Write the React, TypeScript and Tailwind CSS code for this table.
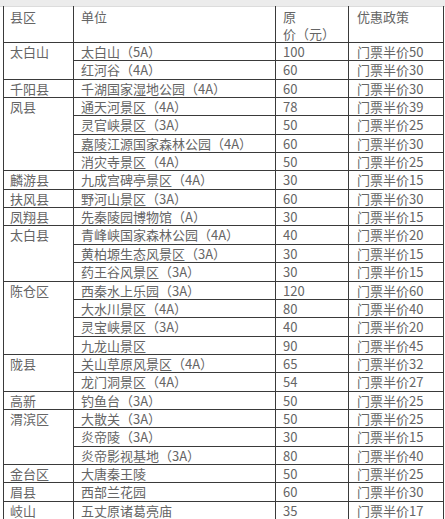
const rows: { county?: string; span?: number; name: string; price: string; policy: string }[] = [
  { county: '太白山', span: 2, name: '太白山（5A）', price: '100', policy: '门票半价50' },
  { name: '红河谷（4A）', price: '60', policy: '门票半价30' },
  { county: '千阳县', span: 1, name: '千湖国家湿地公园（4A）', price: '60', policy: '门票半价30' },
  { county: '凤县', span: 4, name: '通天河景区（4A）', price: '78', policy: '门票半价39' },
  { name: '灵官峡景区（3A）', price: '50', policy: '门票半价25' },
  { name: '嘉陵江源国家森林公园（4A）', price: '60', policy: '门票半价30' },
  { name: '消灾寺景区（4A）', price: '50', policy: '门票半价25' },
  { county: '麟游县', span: 1, name: '九成宫碑亭景区（4A）', price: '30', policy: '门票半价15' },
  { county: '扶风县', span: 1, name: '野河山景区（3A）', price: '60', policy: '门票半价30' },
  { county: '凤翔县', span: 1, name: '先秦陵园博物馆（A）', price: '30', policy: '门票半价15' },
  { county: '太白县', span: 3, name: '青峰峡国家森林公园（4A）', price: '40', policy: '门票半价20' },
  { name: '黄柏塬生态风景区（3A）', price: '30', policy: '门票半价15' },
  { name: '药王谷风景区（3A）', price: '30', policy: '门票半价15' },
  { county: '陈仓区', span: 4, name: '西秦水上乐园（3A）', price: '120', policy: '门票半价60' },
  { name: '大水川景区（4A）', price: '80', policy: '门票半价40' },
  { name: '灵宝峡景区（3A）', price: '40', policy: '门票半价20' },
  { name: '九龙山景区', price: '90', policy: '门票半价45' },
  { county: '陇县', span: 2, name: '关山草原风景区（4A）', price: '65', policy: '门票半价32' },
  { name: '龙门洞景区（4A）', price: '54', policy: '门票半价27' },
  { county: '高新', span: 1, name: '钓鱼台（3A）', price: '50', policy: '门票半价25' },
  { county: '渭滨区', span: 3, name: '大散关（3A）', price: '50', policy: '门票半价25' },
  { name: '炎帝陵（3A）', price: '30', policy: '门票半价15' },
  { name: '炎帝影视基地（3A）', price: '80', policy: '门票半价40' },
  { county: '金台区', span: 1, name: '大唐秦王陵', price: '50', policy: '门票半价25' },
  { county: '眉县', span: 1, name: '西部兰花园', price: '60', policy: '门票半价30' },
  { county: '岐山', span: 1, name: '五丈原诸葛亮庙', price: '35', policy: '门票半价17' },
];

// rows share 477px between the header line (y=40) and the bottom line (y=517)
const rowHeight = (i: number) => Math.round(((i + 1) * 477) / rows.length) - Math.round((i * 477) / rows.length);

const cell = 'border border-[#3a3a3a] px-0 text-[13px] leading-[16px] text-[#656565] whitespace-nowrap';

export default function App() {
  return (
    <div
      className="w-[445px] h-[519px] overflow-hidden bg-white"
      style={{ fontFamily: '"Noto Sans CJK SC", "Noto Sans", sans-serif' }}
    >
      <div className="h-[7px] bg-[#ececec] border-b border-[#dcdcdc]" />
      <table className="ml-[3px] w-[440px] table-fixed border-collapse -mt-[1px]">
        <colgroup>
          <col className="w-[70px]" />
          <col className="w-[202px]" />
          <col className="w-[73px]" />
          <col className="w-[95px]" />
        </colgroup>
        <thead>
          <tr className="h-[34px]">
            <th className={`${cell} border-t-0 align-top text-left font-normal pl-[6px] pt-[2px] leading-[17px]`}>县区</th>
            <th className={`${cell} border-t-0 align-top text-left font-normal pl-[7px] pt-[2px] leading-[17px]`}>单位</th>
            <th className={`${cell} border-t-0 align-top text-left font-normal pl-[7px] pt-[2px] leading-[17px] whitespace-normal`}>
              原<br />价（元）
            </th>
            <th className={`${cell} border-t-0 align-top text-left font-normal pl-[8px] pt-[2px] leading-[17px]`}>优惠政策</th>
          </tr>
        </thead>
        <tbody>
          {rows.map((r, i) => (
            <tr key={i} style={{ height: rowHeight(i) }}>
              {r.county && (
                <td rowSpan={r.span} className={`${cell} align-top pl-[6px] pt-[1px]`}>
                  {r.county}
                </td>
              )}
              <td className={`${cell} align-middle pl-[7px]`}>{r.name}</td>
              <td className={`${cell} align-middle pl-[7px]`}>{r.price}</td>
              <td className={`${cell} align-middle pl-[8px]`}>{r.policy}</td>
            </tr>
          ))}
        </tbody>
      </table>
    </div>
  );
}
